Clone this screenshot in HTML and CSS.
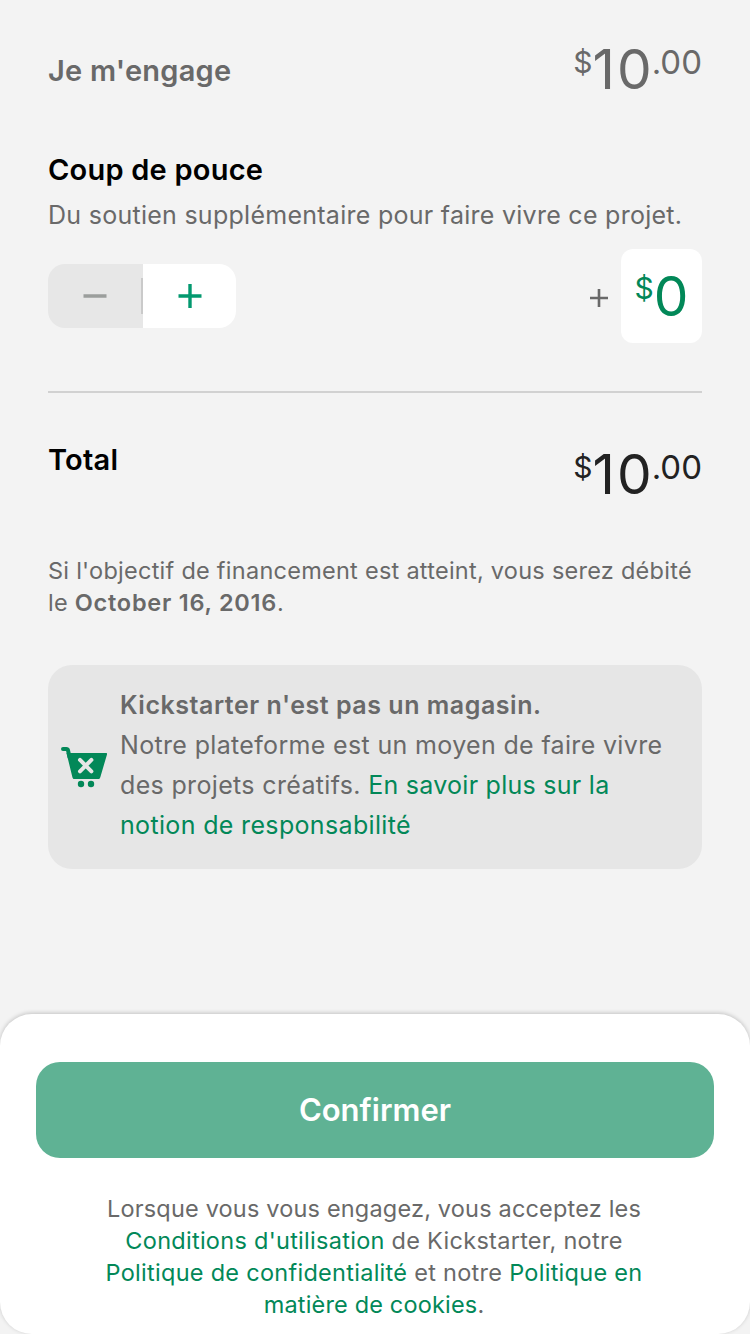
FILE: index.html
```html
<!DOCTYPE html>
<html lang="fr">
<head>
<meta charset="utf-8">
<title>Je m'engage</title>
<link rel="stylesheet" href="styles.css">
</head>
<body>
<main class="summary">
  <section class="row pledge">
    <h2 class="heading heading-muted">Je m'engage</h2>
    <div class="money money-muted"><span class="currency">$</span><span class="whole">10</span><span class="cents">.00</span></div>
  </section>
  <section class="bonus">
    <h2 class="heading heading-bonus">Coup de pouce</h2>
    <p class="subtitle">Du soutien supplémentaire pour faire vivre ce projet.</p>
    <div class="bonus-controls">
      <div class="stepper">
        <button class="step step-minus" aria-label="Moins"><svg width="24" height="24" viewBox="0 0 24 24"><path d="M.5 12h23" stroke="#9b9e9c" stroke-width="3.4"/></svg></button>
        <button class="step step-plus" aria-label="Plus"><svg width="24" height="24" viewBox="0 0 24 24"><path d="M.5 12h23M12 0v24" stroke="#03996f" stroke-width="3.4"/></svg></button>
      </div>
      <div class="bonus-amount">
        <svg class="plus-sign" width="18" height="18" viewBox="0 0 18 18"><path d="M0 9h18M9 0v18" stroke="#696969" stroke-width="2.6"/></svg>
        <div class="amount-field"><span class="currency">$</span><span class="whole">0</span></div>
      </div>
    </div>
  </section>
  <section class="row total">
    <h2 class="heading heading-total">Total</h2>
    <div class="money"><span class="currency">$</span><span class="whole">10</span><span class="cents">.00</span></div>
  </section>
  <p class="charge-note">Si l'objectif de financement est atteint, vous serez débité<br>le <b>October 16, 2016</b>.</p>
  <aside class="notice">
    <svg class="cart" width="48" height="42" viewBox="0 0 48 42">
      <path d="M3 3h3.400c.9 0 1.400.5 1.600 1.300L9.500 11" fill="none" stroke="#028858" stroke-width="4" stroke-linecap="round"/>
      <path d="M6.500 7H46c.9 0 1.200.6 1 1.400l-6.700 22.800c-.4 1.300-1 1.800-2.200 1.800H14.600c-1.200 0-1.900-.5-2.200-1.800z" fill="#028858"/>
      <path d="M20 13.900l11.400 11.400M31.400 13.900L20 25.300" stroke="#e6e6e6" stroke-width="4" stroke-linecap="round"/>
      <circle cx="21" cy="38" r="3.200" fill="#028858"/><circle cx="31" cy="38" r="3.200" fill="#028858"/>
    </svg>
    <p class="notice-text"><b>Kickstarter n'est pas un magasin.</b><br>Notre plateforme est un moyen de faire vivre<br>des projets créatifs. <a class="link link-start">En savoir plus sur la</a><br><a class="link">notion de responsabilité</a></p>
  </aside>
</main>
<footer class="sheet">
  <button class="confirm">Confirmer</button>
  <p class="legal"><span class="legal-intro">Lorsque vous vous engagez, vous acceptez les</span><br><a class="link">Conditions d'utilisation</a> de Kickstarter, notre<br><a class="link">Politique de confidentialité</a> et notre <a class="link">Politique en</a><br><span class="legal-end"><a class="link">matière de cookies</a>.</span></p>
</footer>
</body>
</html>
```
FILE: styles.css
```css
* { box-sizing: border-box; }
body {
  margin: 0;
  width: 750px;
  height: 1334px;
  display: flex;
  flex-direction: column;
  justify-content: space-between;
  overflow: hidden;
  background: #f3f3f3;
  color: #696969;
  font-family: Inter, "Noto Sans", sans-serif;
  white-space: nowrap;
}
h2, p { margin: 0; }
button { border: 0; padding: 0; font: inherit; }
.summary { padding: 42px 48px 0; }
.row { display: flex; justify-content: space-between; align-items: flex-start; }
.heading { font-size: 29px; line-height: 40px; font-weight: 600; letter-spacing: .22px; color: #000; }
.heading-muted { color: #696969; margin-top: 9px; }
.money { display: flex; color: #222; }
.money-muted { color: #696969; }
.currency { font-size: 30px; line-height: 40px; }
.whole { font-size: 55px; line-height: 54px; letter-spacing: 2px; margin-right: -2px; }
.cents { font-size: 33px; line-height: 40px; }
.bonus { margin-top: 54px; padding-bottom: 48px; border-bottom: 2px solid #d1d1d1; }
.subtitle { font-size: 25px; line-height: 32px; margin-top: 9px; letter-spacing: .27px; }
.bonus-controls { display: flex; justify-content: space-between; align-items: center; margin-top: 18px; }
.stepper { display: flex; width: 188px; height: 64px; border-radius: 17px; overflow: hidden; }
.step { width: 93px; display: flex; align-items: center; justify-content: center; }
.step-minus {
  width: 95px;
  padding-right: 2px;
  background: linear-gradient(#cacaca, #cacaca) right center / 2px 36px no-repeat #e7e7e7;
}
.step-plus { background: #fff; }
.bonus-amount { display: flex; align-items: center; gap: 13px; }
.plus-sign { margin-top: 4px; }
.amount-field {
  display: flex;
  justify-content: center;
  width: 81px;
  height: 94px;
  padding-top: 20px;
  border-radius: 12px;
  background: #fff;
  color: #028858;
}
.amount-field .currency { line-height: 38px; }
.total { padding-top: 54px; height: 162px; }
.heading-total { margin-top: -7px; }
.charge-note { font-size: 23.5px; line-height: 32px; letter-spacing: .26px; }
.charge-note b, .notice b { font-weight: 600; }
.charge-note b { letter-spacing: .75px; }
.notice b { letter-spacing: .53px; }
.notice {
  display: flex;
  align-items: center;
  gap: 12px;
  margin-top: 46px;
  height: 204px;
  padding-left: 12px;
  border-radius: 24px;
  background: #e6e6e6;
}
.notice-text { font-size: 25px; line-height: 40px; margin-top: -5px; letter-spacing: .34px; }
.link { color: #028858; }
.link-start { letter-spacing: .27px; }
.sheet {
  height: 320px;
  padding: 48px 36px 0;
  border-radius: 32px;
  background: #fff;
  box-shadow: 0 -1px 4px rgba(0, 0, 0, .2);
  text-align: center;
}
.confirm {
  display: block;
  width: 100%;
  height: 96px;
  padding-bottom: 2px;
  border-radius: 24px;
  background: #5fb294;
  color: #fff;
  font-size: 31px;
  font-weight: 600;
}
.legal { margin-top: 35px; padding-right: 2px; font-size: 23.5px; line-height: 32px; letter-spacing: .28px; }
.legal-intro { letter-spacing: .18px; }
.legal-end { letter-spacing: .17px; }
```
